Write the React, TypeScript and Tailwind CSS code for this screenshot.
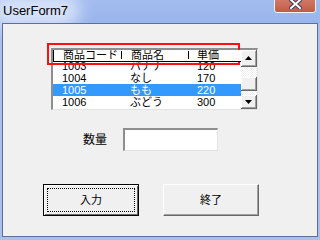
const rows = [
  { code: '1003', name: 'バナナ', price: '120' },
  { code: '1004', name: 'なし', price: '170' },
  { code: '1005', name: 'もも', price: '220' },
  { code: '1006', name: 'ぶどう', price: '300' },
];

const font = { fontFamily: '"Liberation Sans", "Noto Sans CJK JP", sans-serif' };

function Arrow({ up }: { up?: boolean }) {
  return (
    <svg width="7" height="4" viewBox="0 0 7 4">
      <path d={up ? 'M3.5 0L7 4H0Z' : 'M0 0H7L3.5 4Z'} fill="#000" />
    </svg>
  );
}

export default function App() {
  return (
    <div className="w-[320px] h-[240px] overflow-hidden flex flex-col bg-[#a9c0ef]" style={font}>
      {/* Title bar */}
      <div className="relative h-[23px] shrink-0 bg-gradient-to-b from-[#a3bcef] to-[#9ab5ec] flex items-center">
        <div className="absolute left-[-10px] top-[-6px] w-[90px] h-[34px] rounded-full bg-[#e4ecfb] blur-[8px] opacity-80" />
        <span className="relative pl-[3px] pb-[3px] text-[13px] text-black leading-none">UserForm7</span>
        <div className="absolute right-[4px] top-[-8px] w-[42px] h-[21px] rounded-[3px] border border-[#f2f2f2] bg-gradient-to-b from-[#d9897a] to-[#c25a45] flex items-end justify-center pb-[3px]">
          <svg width="13" height="10" viewBox="0 0 13 10">
            <path d="M2 1L11 9M11 1L2 9" stroke="#3d3d5c" strokeWidth="4" strokeLinecap="square" />
            <path d="M2 1L11 9M11 1L2 9" stroke="#fff" strokeWidth="2" strokeLinecap="square" />
          </svg>
        </div>
      </div>

      {/* Frame + client */}
      <div className="flex-1 px-[2px] pb-[3px] flex">
        <div className="relative flex-1 border border-[#5a6f9c] bg-[#f0f0f0]">
          {/* ListBox */}
          <div className="ml-[48px] mt-[24px] w-[207px] h-[62px] border-t-[2px] border-l-[2px] border-b border-r border-t-[#8e8e8e] border-l-[#8e8e8e] border-b-[#e3e3e3] border-r-[#e3e3e3] bg-white flex">
            <div className="flex-1 flex flex-col overflow-hidden text-[11px] leading-[12px] text-black">
              <div className="relative z-10 h-[12px] shrink-0 bg-white border-b border-l border-black">
                <span className="absolute left-[9px] top-0 leading-[11px]">商品コード</span>
                <div className="absolute left-[67px] top-[1px] h-[8px] w-px bg-black" />
                <span className="absolute left-[77px] top-0 leading-[11px]">商品名</span>
                <div className="absolute left-[134px] top-[1px] h-[8px] w-px bg-black" />
                <span className="absolute left-[143px] top-0 leading-[11px]">単価</span>
              </div>
              <div className="mt-[-2px]">
                {rows.map((r) => (
                  <div
                    key={r.code}
                    className={`relative h-[12px] ${r.code === '1005' ? 'bg-[#3399ff] text-white' : ''}`}
                  >
                    <span className="absolute left-[9px] top-0">{r.code}</span>
                    <span className="absolute left-[77px] top-0">{r.name}</span>
                    <span className="absolute left-[144px] top-0">{r.price}</span>
                  </div>
                ))}
              </div>
            </div>
            {/* Scrollbar */}
            <div className="w-[16px] flex flex-col bg-[repeating-conic-gradient(#f0f0f0_0_25%,#ffffff_0_50%)] bg-[length:2px_2px]">
              <div className="h-[17px] shrink-0 bg-[#f0f0f0] border-r border-b border-r-[#696969] border-b-[#696969] shadow-[inset_1px_1px_0_#fff,inset_-1px_-1px_0_#a0a0a0] flex items-center justify-center">
                <Arrow up />
              </div>
              <div className="h-[10px] shrink-0" />
              <div className="h-[14px] shrink-0 bg-[#f0f0f0] border-r border-b border-r-[#696969] border-b-[#696969] shadow-[inset_1px_1px_0_#fff,inset_-1px_-1px_0_#a0a0a0]" />
              <div className="flex-1" />
              <div className="h-[14px] shrink-0 bg-[#f0f0f0] border-r border-b border-r-[#696969] border-b-[#696969] shadow-[inset_1px_1px_0_#fff,inset_-1px_-1px_0_#a0a0a0] flex items-center justify-center">
                <Arrow />
              </div>
            </div>
          </div>

          {/* Red highlight */}
          <div className="absolute left-[44px] top-[19px] w-[193px] h-[22px] border-2 border-[#ff1010]" />

          {/* Quantity */}
          <div className="mt-[18px] flex items-center">
            <span className="ml-[80px] w-[40px] text-[12px] leading-none text-black">数量</span>
            <div className="w-[95px] h-[23px] bg-white border-t-[2px] border-l-[2px] border-b border-r border-t-[#8e8e8e] border-l-[#8e8e8e] border-b-[#e3e3e3] border-r-[#e3e3e3]" />
          </div>

          {/* Buttons */}
          <div className="mt-[33px] flex text-[11px] text-black">
            <div className="ml-[40px] w-[96px] h-[32px] border border-black bg-[#f0f0f0] shadow-[inset_1px_1px_0_#fff,inset_-1px_-1px_0_#696969] p-[3px]">
              <div className="w-full h-full border border-dotted border-black flex items-center justify-center">入力</div>
            </div>
            <div className="ml-[24px] w-[96px] h-[32px] bg-[#f0f0f0] border-t border-l border-t-[#fff] border-l-[#fff] border-r border-b border-r-[#696969] border-b-[#696969] shadow-[inset_-1px_-1px_0_#a0a0a0] flex items-center justify-center">
              終了
            </div>
          </div>
        </div>
      </div>
    </div>
  );
}
